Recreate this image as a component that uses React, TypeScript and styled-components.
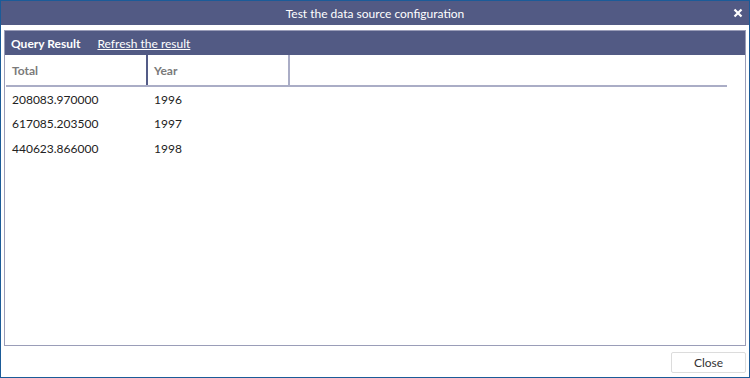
import React from "react";
import styled, { createGlobalStyle } from "styled-components";

const GlobalStyle = createGlobalStyle`
  html, body {
    margin: 0;
    padding: 0;
    width: 750px;
    height: 378px;
    overflow: hidden;
    background: #ffffff;
  }
  body {
    font-family: Lato, "Open Sans", "Liberation Sans", sans-serif;
    font-size: 12px;
  }
`;

const Window = styled.div`
  box-sizing: border-box;
  width: 750px;
  height: 378px;
  border: 1px solid #1b5b98;
  display: flex;
  flex-direction: column;
  background: #ffffff;
`;

const TitleBar = styled.div`
  position: relative;
  height: 24px;
  flex: none;
  background: #525a84;
  color: #ffffff;
  display: flex;
  align-items: center;
  justify-content: center;
  font-size: 12px;
`;

const CloseX = styled.span`
  position: absolute;
  right: 5px;
  top: 6px;
  width: 12px;
  height: 12px;
  display: flex;
  align-items: center;
  justify-content: center;
`;

const Body = styled.div`
  flex: 1;
  display: flex;
  flex-direction: column;
  padding: 5px 3px 0 3px;
  min-height: 0;
`;

const Panel = styled.div`
  flex: 1;
  display: flex;
  flex-direction: column;
  border: 1px solid #9a9db8;
  box-shadow: inset 1px 1px 0 #c8cad9;
  min-height: 0;
`;

const PanelHeader = styled.div`
  height: 24px;
  flex: none;
  background: #525a84;
  display: flex;
  align-items: center;
  gap: 17px;
  padding-left: 6px;
  color: #ffffff;
`;

const HeaderTitle = styled.span`
  font-weight: 700;
`;

const HeaderLink = styled.a`
  color: #ffffff;
  text-decoration: underline;
  cursor: pointer;
`;

const Grid = styled.div`
  flex: 1;
  background: #ffffff;
  padding-left: 1px;
`;

const HeadRow = styled.div`
  display: grid;
  grid-template-columns: 142px 142px;
  width: 721px;
  height: 30px;
  border-bottom: 2px solid #aaadc6;
`;

const HeadCell = styled.div<{ $line: string }>`
  display: flex;
  align-items: center;
  padding-left: 6px;
  color: #7a7a7a;
  font-weight: 700;
  border-right: 2px solid ${(p) => p.$line};
`;

const Row = styled.div`
  display: grid;
  grid-template-columns: 142px 142px;
  height: 24.5px;
  align-items: center;
  color: #222222;
  &:first-of-type {
    margin-top: 4px;
  }
`;

const Cell = styled.div`
  padding-left: 6px;
`;

const Footer = styled.div`
  height: 31px;
  flex: none;
  display: flex;
  justify-content: flex-end;
  align-items: flex-start;
  padding-top: 6px;
  box-sizing: border-box;
`;

const Button = styled.button`
  width: 75px;
  height: 21px;
  background: #ffffff;
  border: 1px solid #dcdcdc;
  border-radius: 2px;
  font-family: inherit;
  font-size: 12px;
  color: #333333;
  padding: 0;
`;

const rows = [
  { total: "208083.970000", year: "1996" },
  { total: "617085.203500", year: "1997" },
  { total: "440623.866000", year: "1998" },
];

export default function App() {
  return (
    <>
      <GlobalStyle />
      <Window>
        <TitleBar>
          Test the data source configuration
          <CloseX>
            <svg width="10" height="10" viewBox="0 0 10 10">
              <path d="M1.5 1.5 L8.5 8.5 M8.5 1.5 L1.5 8.5" stroke="#ffffff" strokeWidth="2.2" />
            </svg>
          </CloseX>
        </TitleBar>
        <Body>
          <Panel>
            <PanelHeader>
              <HeaderTitle>Query Result</HeaderTitle>
              <HeaderLink>Refresh the result</HeaderLink>
            </PanelHeader>
            <Grid>
              <HeadRow>
                <HeadCell $line="#545c87">Total</HeadCell>
                <HeadCell $line="#aaadc6">Year</HeadCell>
              </HeadRow>
              {rows.map((r) => (
                <Row key={r.year}>
                  <Cell>{r.total}</Cell>
                  <Cell>{r.year}</Cell>
                </Row>
              ))}
            </Grid>
          </Panel>
          <Footer>
            <Button>Close</Button>
          </Footer>
        </Body>
      </Window>
    </>
  );
}
